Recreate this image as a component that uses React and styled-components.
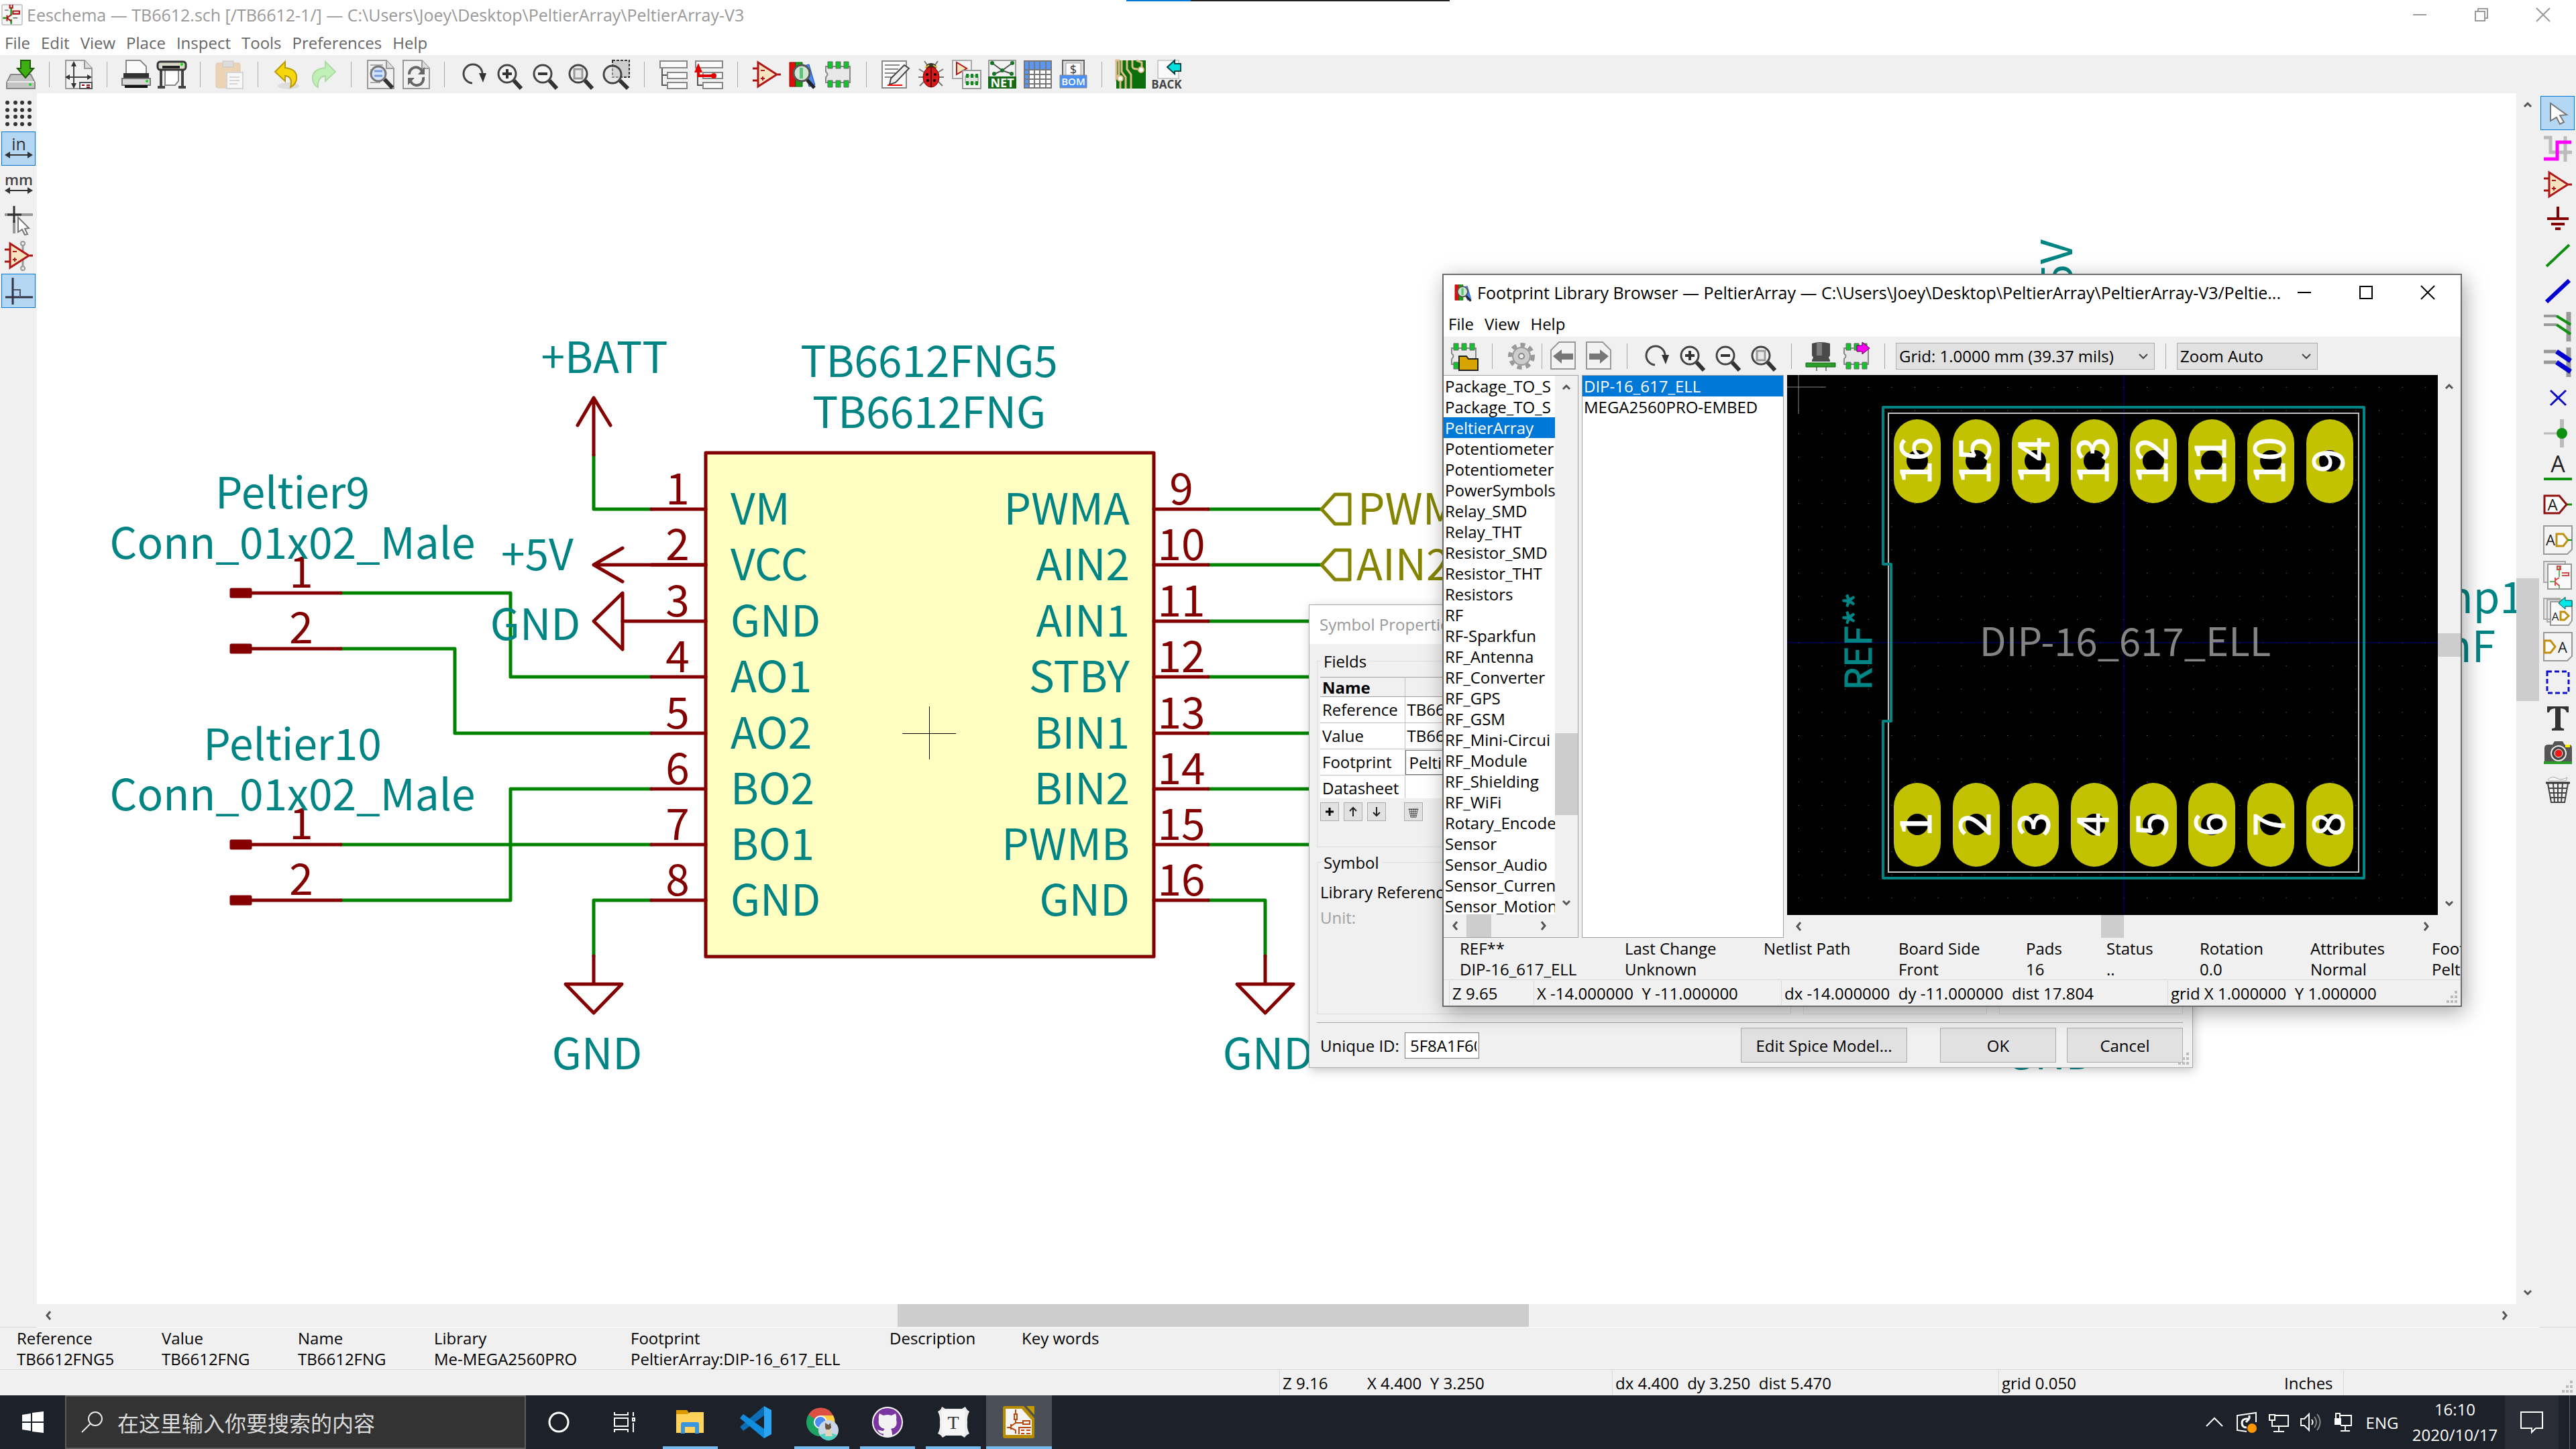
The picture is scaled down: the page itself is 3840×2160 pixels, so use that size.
import React from "react";
import styled, { createGlobalStyle, css } from "styled-components";

const ui = '"Open Sans", "Noto Sans", "Noto Sans CJK SC", sans-serif';
const plotter = '"Noto Sans CJK SC", "Open Sans", sans-serif';
const teal = "#008484";
const maroon = "#840000";
const wire = "#008400";
const olive = "#848400";

const GlobalStyle = createGlobalStyle`
  *, *::before, *::after { box-sizing: border-box; }
  html, body { margin: 0; background: #f0f0f0; }
  body { font-family: ${ui}; font-size: 24px; line-height: 31px; color: #000; }
  button, input, select { font: inherit; color: inherit; margin: 0; }
  button { border: 0; background: none; padding: 0; }
  ul { list-style: none; margin: 0; padding: 0; }
`;

/* ---------- shared parts ---------- */

const Desktop = styled.div`
  position: relative;
  display: flex;
  flex-direction: column;
  height: 100vh;
  overflow: hidden;
  background: #f0f0f0;
`;
const Glyph = styled.svg`
  display: block;
  flex: none;
  width: ${(p) => p.$size || 44}px;
  height: ${(p) => p.$size || 44}px;
  overflow: visible;
`;
const TitleBar = styled.header`
  display: flex;
  align-items: center;
  flex: none;
  height: ${(p) => p.$height}px;
  padding: 0 3px 2px ${(p) => p.$inset}px;
  background: #fff;
  color: ${(p) => (p.$active ? "#000" : "#999")};
`;
const TitleText = styled.h1`
  flex: 1;
  min-width: 0;
  margin: 0;
  padding-left: ${(p) => (p.$bare ? 0 : 7)}px;
  font-size: ${(p) => (p.$bare ? 24 : 25)}px;
  font-weight: 400;
  white-space: nowrap;
`;
const WindowButton = styled.button`
  display: flex;
  align-items: center;
  justify-content: center;
  width: 92px;
  height: 44px;
`;
const MenuBar = styled.nav`
  display: flex;
  align-items: center;
  flex: none;
  height: ${(p) => p.$height}px;
  padding: 0 0 2px ${(p) => p.$inset}px;
  gap: 16px;
  background: #fff;
  color: ${(p) => (p.$active ? "#000" : "#666")};
`;
const ToolBar = styled.div`
  display: flex;
  align-items: center;
  flex: none;
  height: 57px;
  padding-left: ${(p) => p.$inset}px;
  background: #f0f0f0;
`;
const ToolButton = styled.button`
  display: flex;
  align-items: center;
  justify-content: center;
  flex: none;
  width: 53px;
  height: 51px;
  opacity: ${(p) => (p.$dim ? 0.5 : 1)};
`;
const Divider = styled.span`
  flex: none;
  width: 1px;
  height: 38px;
  margin: 0 ${(p) => (p.$tight ? 4 : 16)}px;
  background: #a8a8a8;
`;
const SideBar = styled.aside`
  display: flex;
  flex-direction: column;
  flex: none;
  width: 55px;
  padding: 4px 2px;
  gap: 2px;
  background: #f0f0f0;
  border-bottom: 1px solid #d8d8d8;
`;
const SideButton = styled.button`
  display: flex;
  align-items: center;
  justify-content: center;
  width: 51px;
  height: 51px;
  border: 1px solid ${(p) => (p.$on ? "#0078d7" : "transparent")};
  background: ${(p) => (p.$on ? "#b3d7f3" : "transparent")};
`;

/* ---------- scroll bars ---------- */

const ScrollTrack = styled.div`
  display: flex;
  flex: none;
  flex-direction: ${(p) => (p.$vertical ? "column" : "row")};
  ${(p) => (p.$vertical ? css`width: 34px;` : css`height: 34px;`)}
  background: #f0f0f0;
`;
const ScrollArrow = styled.button`
  display: flex;
  align-items: center;
  justify-content: center;
  flex: none;
  width: 34px;
  height: 34px;
`;
const ScrollPart = styled.span`
  flex: ${(p) => p.$grow} 0 0;
  background: ${(p) => (p.$thumb ? "#cdcdcd" : "transparent")};
`;
const arrows = {
  up: "M3 11 8 6 13 11",
  down: "M3 5 8 10 13 5",
  left: "M11 2 6 8 11 14",
  right: "M5 2 10 8 5 14",
};
function Arrow({ dir }) {
  return (
    <ScrollArrow aria-label={"Scroll " + dir}>
      <Glyph $size={16} viewBox="0 0 16 16">
        <path d={arrows[dir]} fill="none" stroke="#555" strokeWidth="3" />
      </Glyph>
    </ScrollArrow>
  );
}
function ScrollBar({ vertical, parts }) {
  return (
    <ScrollTrack $vertical={vertical}>
      <Arrow dir={vertical ? "up" : "left"} />
      <ScrollPart $grow={parts[0]} />
      <ScrollPart $grow={parts[1]} $thumb />
      <ScrollPart $grow={parts[2]} />
      <Arrow dir={vertical ? "down" : "right"} />
    </ScrollTrack>
  );
}

/* ---------- icons ---------- */

const Lens = ({ children }) => (
  <>
    <path d="M29 31 40 43" stroke="#333" strokeWidth="6" />
    <circle cx="19" cy="21" r="13" fill="#f4f4f4" stroke="#444" strokeWidth="3" />
    {children}
  </>
);
const Sheet = ({ children }) => (
  <>
    <path d="M3 1H31L42 13V43H3Z" fill="#f1f1f1" stroke="#999" strokeWidth="2" />
    <path d="M31 1V13H42" fill="#ddd" stroke="#999" strokeWidth="2" />
    {children}
  </>
);
const OpAmp = () => (
  <>
    <path d="M1 13H10M1 31H10M38 22H43" stroke="#a11" strokeWidth="3" />
    <path d="M9 4V40L37 22Z" fill="#f6e3c0" stroke="#b01818" strokeWidth="3" />
    <path d="M13 16H19M13 28H19M16 25V31" stroke="#b01818" strokeWidth="2" />
  </>
);
const Chip = ({ children }) => (
  <>
    <path d="M4 10H40V34H4V26Q9 22 4 18Z" fill="#e8e8e8" stroke="#888" strokeWidth="2" />
    <path d="M7 3H14V13H7ZM19 3H26V13H19ZM31 3H38V13H31ZM7 31H14V41H7ZM19 31H26V41H19ZM31 31H38V41H31Z" fill="#12c42c" stroke="#666" strokeWidth="1" />
    {children}
  </>
);
const Books = () => (
  <>
    <path d="M3 4H12V40H3Z" fill="#e00d0d" stroke="#900" />
    <path d="M12 4H22V40H12Z" fill="#1a9c1a" stroke="#060" />
    <path d="M24 9 32 7 41 38 32 40Z" fill="#4a88f0" stroke="#25b" />
    <path d="M29 30 40 42" stroke="#222" strokeWidth="5" />
    <circle cx="21" cy="20" r="12" fill="#cfe6d4" stroke="#555" strokeWidth="3" />
    <path d="M18 12H23V28H18Z" fill="#5cc478" />
  </>
);
const Rows = () => (
  <>
    <path d="M5 12V38H13M5 23H13" fill="none" stroke="#555" strokeWidth="2" />
    <path d="M2 2H42V12H2ZM13 19H42V28H13ZM13 34H42V43H13Z" fill="#fafafa" stroke="#888" strokeWidth="2" />
  </>
);
const Rot = () => (
  <>
    <path d="M20 35A14 14 0 1 1 35 21" fill="none" stroke="#444" strokeWidth="3" />
    <path d="M30 20H41L36 34Z" fill="#333" />
  </>
);
const Trash = () => (
  <>
    <path d="M7 8Q14 2 20 6T36 5L34 10H9Z" fill="#f5f5f5" stroke="#aaa" />
    <path d="M4 13H40" stroke="#333" strokeWidth="3" />
    <path d="M7 14 12 42H32L37 14M8 21H36M9 28H35M11 35H33M15 14 17 42M22 14V42M29 14 27 42" fill="none" stroke="#444" strokeWidth="2" />
  </>
);

const icons = {
  save: (
    <>
      <path d="M7 22H37L43 34V43H1V34Z" fill="#c4c4c4" stroke="#888" strokeWidth="2" />
      <path d="M2 33H42" stroke="#eee" strokeWidth="2" />
      <circle cx="36" cy="37" r="2" fill="#1d1" />
      <path d="M22 1H36V13H41L29 27 17 13H22Z" fill="#3fae12" stroke="#1f5a08" strokeWidth="2" />
    </>
  ),
  page: (
    <Sheet>
      <path d="M3 26H40M15 5V42" stroke="#444" strokeWidth="2" />
      <path d="M15 2 11 10H19ZM15 43 11 35H19ZM2 26 9 22V30ZM42 26 35 22V30Z" fill="#333" />
      <path d="M24 34H42V43H24Z" fill="#fff" stroke="#555" strokeWidth="2" />
      <path d="M27 38H31M34 38H39M34 41H39" stroke="#900" strokeWidth="2" />
    </Sheet>
  ),
  print: (
    <>
      <path d="M7 1H28L37 10V22H7Z" fill="#fafafa" stroke="#888" strokeWidth="2" />
      <path d="M3 20H41V30H3Z" fill="#333" />
      <path d="M1 28H43V38H1Z" fill="#d6d6d6" stroke="#777" strokeWidth="2" />
      <path d="M5 40H39" stroke="#111" strokeWidth="4" />
      <circle cx="38" cy="32" r="2" fill="#1d1" />
    </>
  ),
  plot: (
    <>
      <path d="M6 16V40M38 16V40M1 41H12M32 41H43" stroke="#444" strokeWidth="4" />
      <path d="M12 12H32V32L27 38H12Z" fill="#fff" stroke="#888" strokeWidth="2" />
      <rect x="1" y="3" width="42" height="12" rx="4" fill="#d8d8c8" stroke="#333" strokeWidth="3" />
      <path d="M8 11H34" stroke="#222" strokeWidth="4" />
      <circle cx="37" cy="7" r="2" fill="#1d1" />
    </>
  ),
  paste: (
    <>
      <rect x="2" y="5" width="36" height="37" rx="3" fill="#e8b878" stroke="#d0a468" />
      <path d="M12 2H28V11H12Z" fill="#ccc" stroke="#999" />
      <path d="M18 19H42V43H18Z" fill="#fff" stroke="#bbb" strokeWidth="2" />
      <path d="M22 26H37M22 31H37M22 36H34" stroke="#bbb" strokeWidth="2" />
    </>
  ),
  undo: (
    <>
      <ellipse cx="24" cy="39" rx="16" ry="5" fill="#ddd" />
      <path d="M4 18 19 3V12Q38 14 36 29 35 37 27 41 31 25 19 24V32Z" fill="#f6d60c" stroke="#b89b10" strokeWidth="2" />
    </>
  ),
  redo: <path d="M41 18 26 3V12Q6 14 7 29 8 38 15 41 14 26 26 24V32Z" fill="#8ff07c" stroke="#6cc85e" strokeWidth="2" />,
  find: (
    <Sheet>
      <path d="M7 8H26M7 15H12M7 34H22" stroke="#aaa" strokeWidth="2" />
      <path d="M28 29 40 42" stroke="#333" strokeWidth="6" />
      <circle cx="19" cy="21" r="11" fill="#d5e4fb" stroke="#777" strokeWidth="3" />
      <path d="M13 17H25M13 24H25" stroke="#7b9cdc" strokeWidth="3" />
    </Sheet>
  ),
  replace: (
    <Sheet>
      <path d="M12 22A10 10 0 0 1 31 17M33 26A10 10 0 0 1 14 32" fill="none" stroke="#666" strokeWidth="4" />
      <path d="M35 11V22H25ZM10 38V27H20Z" fill="#666" />
    </Sheet>
  ),
  rotate: <Rot />,
  zoomIn: <Lens><path d="M12 21H26M19 14V28" stroke="#333" strokeWidth="4" /></Lens>,
  zoomOut: <Lens><path d="M12 21H26" stroke="#333" strokeWidth="4" /></Lens>,
  zoomFit: <Lens><rect x="13" y="14" width="12" height="14" fill="#e8e8e8" stroke="#999" strokeWidth="3" /></Lens>,
  zoomArea: (
    <>
      <rect x="17" y="1" width="25" height="25" fill="#ccc" stroke="#333" strokeWidth="2" strokeDasharray="4 2" />
      <path d="M28 31 40 43" stroke="#333" strokeWidth="6" />
      <circle cx="17" cy="22" r="13" fill="#ddd" fillOpacity="0.5" stroke="#444" strokeWidth="3" />
    </>
  ),
  hierarchy: <Rows />,
  leave: (
    <>
      <Rows />
      <path d="M6 14V24H28" fill="none" stroke="#e00000" strokeWidth="4" />
      <path d="M0 19 6 5 12 19Z" fill="#e00000" />
      <circle cx="29" cy="24" r="4" fill="#e00000" />
    </>
  ),
  opamp: <OpAmp />,
  books: <Books />,
  chip: <Chip />,
  annotate: (
    <>
      <path d="M2 2H38V42H2Z" fill="#fafafa" stroke="#888" strokeWidth="2" />
      <path d="M6 8H28M6 14H26M6 20H22M6 26H18" stroke="#888" strokeWidth="2" />
      <path d="M35 8 42 13 22 34 13 37 15 28Z" fill="#eee" stroke="#444" strokeWidth="2" />
      <path d="M10 38H32" stroke="#f00" strokeWidth="2" />
    </>
  ),
  bug: (
    <>
      <path d="M12 2 19 12M32 2 25 12M4 14 12 19M40 14 32 19M3 26H10M41 26H34M5 39 12 32M39 39 32 32" stroke="#777" strokeWidth="2" />
      <ellipse cx="22" cy="11" rx="8" ry="6" fill="#333" />
      <ellipse cx="22" cy="26" rx="12" ry="15" fill="#d81818" stroke="#800" />
      <path d="M22 12V41" stroke="#500" strokeWidth="2" />
      <path d="M13 12 19 8M31 12 25 8" stroke="#e8c020" strokeWidth="2" />
      <circle cx="16" cy="22" r="2" /><circle cx="28" cy="22" r="2" /><circle cx="17" cy="31" r="2" /><circle cx="27" cy="31" r="2" />
    </>
  ),
  assign: (
    <>
      <path d="M1 1H29V28H1Z" fill="#f4f4f4" stroke="#aaa" strokeWidth="2" />
      <path d="M7 4V22L22 13Z" fill="#f6e3c0" stroke="#b01818" strokeWidth="2" />
      <path d="M16 16H43V43H16Z" fill="#f4f4f4" stroke="#999" strokeWidth="2" />
      <path d="M20 24H39V35H20Z" fill="#e0e0e0" stroke="#888" />
      <path d="M21 21H25V27H21ZM28 21H32V27H28ZM35 21H39V27H35ZM21 32H25V38H21ZM28 32H32V38H28ZM35 32H39V38H35Z" fill="#0b8c1c" />
    </>
  ),
  net: (
    <>
      <path d="M2 1H42V26H2Z" fill="#f2f2f2" stroke="#999" strokeWidth="2" />
      <path d="M7 5 22 16 37 5M22 16 11 21M22 16 36 21" fill="none" stroke="#555" strokeWidth="2" />
      <circle cx="7" cy="5" r="3" fill="#172" /><circle cx="37" cy="5" r="3" fill="#172" /><circle cx="22" cy="16" r="3" fill="#172" /><circle cx="10" cy="21" r="3" fill="#172" /><circle cx="36" cy="21" r="3" fill="#172" />
      <path d="M1 25H43V43H1Z" fill="#166a16" />
      <text x="22" y="41" textAnchor="middle" fontSize="18" fontWeight="700" fill="#fff">NET</text>
    </>
  ),
  table: (
    <>
      <path d="M2 2H42V42H2Z" fill="#fff" />
      <path d="M2 2H42V15H2ZM2 15H9V42H2Z" fill="#5a96f5" />
      <path d="M2 2H42V42H2ZM2 15H42M2 22H42M2 29H42M2 36H42M9 2V42M17 2V42M25 2V42M34 2V42" fill="none" stroke="#777" strokeWidth="2" />
    </>
  ),
  bom: (
    <>
      <path d="M6 1H38V26H6Z" fill="#ddd" stroke="#666" strokeWidth="2" />
      <path d="M11 5H33V24H11Z" fill="#fff" stroke="#999" />
      <text x="22" y="21" textAnchor="middle" fontSize="18" fill="#333">$</text>
      <path d="M2 23H42V42H2Z" fill="#4a90f8" stroke="#888" />
      <text x="22" y="38" textAnchor="middle" fontSize="15" fontWeight="600" fill="#fff">BOM</text>
    </>
  ),
  pcb: (
    <>
      <path d="M0 1H44V43H0Z" fill="#0a6e0a" />
      <path d="M0 1H4V22L0 28ZM8 1V18L14 26V43M16 1V14L22 22V43M24 1V10Q24 14 32 14M30 1 38 4V12" fill="none" stroke="#dcbc8a" strokeWidth="3" />
      <circle cx="37" cy="15" r="4" fill="#fff" stroke="#dcbc8a" strokeWidth="2" /><circle cx="6" cy="28" r="4" fill="#fff" stroke="#dcbc8a" strokeWidth="2" />
      <path d="M6 32V43" stroke="#dcbc8a" strokeWidth="3" />
    </>
  ),
  back: (
    <>
      <path d="M9 1H40V28H9Z" fill="#fafafa" stroke="#ccc" strokeWidth="2" />
      <path d="M23 11 34 1V6H43V17H34V21Z" fill="#00e0e0" stroke="#044" strokeWidth="2" />
      <text x="22" y="43" textAnchor="middle" fontSize="17" fontWeight="700" fill="#444">BACK</text>
    </>
  ),
  grid: (
    <>
      {[6, 17, 27, 38].map((y) => [5, 17, 27, 38].map((x) => <circle key={x + "-" + y} cx={x} cy={y} r="3" fill="#333" />))}
    </>
  ),
  inch: (
    <>
      <text x="22" y="24" textAnchor="middle" fontSize="25" fill="#333">in</text>
      <path d="M5 31H39" stroke="#333" strokeWidth="2" />
      <path d="M1 31 9 26V36ZM43 31 35 26V36Z" fill="#333" />
    </>
  ),
  mm: (
    <>
      <text x="22" y="23" textAnchor="middle" fontSize="22" fontWeight="600" fill="#444">mm</text>
      <path d="M5 31H39" stroke="#333" strokeWidth="2" />
      <path d="M1 31 9 26V36ZM43 31 35 26V36Z" fill="#333" />
    </>
  ),
  cursor: (
    <>
      <path d="M1 14H43M15 22V42" stroke="#999" strokeWidth="4" />
      <path d="M15 1V26M5 14H26" stroke="#333" strokeWidth="3" />
      <path d="M21 18 37 34 31 35 35 43 31 44 27 36 21 40Z" fill="#fff" stroke="#777" strokeWidth="2" />
    </>
  ),
  hidden: (
    <>
      <path d="M28 5V39" stroke="#999" strokeWidth="3" />
      <circle cx="28" cy="4" r="3" fill="#eee" stroke="#999" strokeWidth="2" /><circle cx="28" cy="41" r="3" fill="#eee" stroke="#999" strokeWidth="2" />
      <OpAmp />
    </>
  ),
  ortho: (
    <>
      <path d="M13 2V42M2 31H43" stroke="#334" strokeWidth="3" />
      <path d="M14 20H24V31" fill="none" stroke="#556" strokeWidth="2" />
    </>
  ),
  pointer: <path d="M11 7 35 24 25 25 31 35 25 38 20 28 11 33Z" fill="#fff" stroke="#777" strokeWidth="2" />,
  highlight: (
    <>
      <path d="M1 5H11V27H43M33 3V41" fill="none" stroke="#bbb" strokeWidth="5" />
      <path d="M1 37H21V12H42" fill="none" stroke="#f0f" strokeWidth="5" />
    </>
  ),
  ground: <path d="M22 2V20M6 20H38M12 28H32M18 35H26" stroke={maroon} strokeWidth="4" />,
  wire: <path d="M5 38 39 6" stroke="#109010" strokeWidth="4" />,
  bus: <path d="M5 38 39 6" stroke="#0000d0" strokeWidth="6" />,
  wireEntry: (
    <>
      <path d="M1 6H20M1 19H20" stroke="#999" strokeWidth="4" />
      <path d="M38 0V44" stroke="#999" strokeWidth="7" />
      <path d="M20 6 41 19M20 19 41 33" stroke="#109010" strokeWidth="4" />
    </>
  ),
  busEntry: (
    <>
      <path d="M1 6H20M1 22H20" stroke="#999" strokeWidth="5" />
      <path d="M38 0V44" stroke="#999" strokeWidth="7" />
      <path d="M20 6 41 20M20 22 41 36" stroke="#0000d0" strokeWidth="7" />
    </>
  ),
  noConnect: <path d="M11 11 34 33M34 11 11 33" stroke="#1010c0" strokeWidth="3" />,
  junction: (
    <>
      <path d="M1 22H22" stroke="#bbb" strokeWidth="3" />
      <path d="M28 1V43" stroke="#bbb" strokeWidth="6" />
      <circle cx="28" cy="22" r="8" fill="#109010" />
    </>
  ),
  label: (
    <>
      <text x="22" y="27" textAnchor="middle" fontSize="34" fill="#222">A</text>
      <path d="M1 37H43" stroke="#109010" strokeWidth="4" />
    </>
  ),
  globalLabel: (
    <>
      <path d="M34 22H43" stroke="#109010" strokeWidth="3" />
      <path d="M2 9H24L35 22 24 35H2Z" fill="#fff" stroke="#901010" strokeWidth="3" />
      <text x="14" y="31" textAnchor="middle" fontSize="24" fill="#222">A</text>
    </>
  ),
  hierLabel: (
    <>
      <path d="M1 1H43V36L36 43H1Z" fill="#f4f4f4" stroke="#999" strokeWidth="2" />
      <text x="11" y="30" textAnchor="middle" fontSize="22" fill="#222">A</text>
      <path d="M20 13H30L37 22 30 31H20Z" fill="#fff" stroke="#c09010" strokeWidth="3" />
      <path d="M37 22H43" stroke="#109010" strokeWidth="2" />
    </>
  ),
  sheet: (
    <>
      <path d="M1 1H33V32H1Z" fill="#e6e6e6" stroke="#aaa" strokeWidth="2" />
      <path d="M7 5H42V42H7Z" fill="#fafafa" stroke="#999" strokeWidth="2" />
      <path d="M10 31H17M24 8V24M24 36V41" stroke="#5cb85c" strokeWidth="2" />
      <path d="M18 25V37M18 29 24 25M18 32 24 37M28 18H38V22H28M21 8H26V13H21Z" fill="none" stroke="#d84848" strokeWidth="2" />
    </>
  ),
  importLabel: (
    <>
      <path d="M1 3H25V34H1ZM6 5H30V38H6Z" fill="#e8e8e8" stroke="#aaa" strokeWidth="2" />
      <path d="M11 8H43V36L38 43H11Z" fill="#fafafa" stroke="#999" strokeWidth="2" />
      <path d="M23 10 33 1V6H43V15H33V19Z" fill="#00e8e8" stroke="#044" strokeWidth="1" />
      <text x="18" y="36" textAnchor="middle" fontSize="17" fill="#222">A</text>
      <path d="M26 23H32L38 29 32 35H26Z" fill="#fff" stroke="#c09010" strokeWidth="3" />
    </>
  ),
  sheetPin: (
    <>
      <path d="M1 1H43V36L36 43H1Z" fill="#f4f4f4" stroke="#999" strokeWidth="2" />
      <path d="M2 13H11L18 22 11 31H2Z" fill="#fff" stroke="#c09010" strokeWidth="3" />
      <text x="29" y="31" textAnchor="middle" fontSize="22" fill="#222">A</text>
    </>
  ),
  dashed: <rect x="6" y="6" width="32" height="32" fill="none" stroke="#1010d0" strokeWidth="3" strokeDasharray="7 4" />,
  text: <path d="M6 5H38V14H35Q34 8 26 8V35Q26 38 31 38V41H13V38Q18 38 18 35V8Q10 8 9 14H6Z" fill="#333" />,
  camera: (
    <>
      <path d="M2 14Q2 9 8 9H14L17 4H29L32 9H38Q43 9 43 14V35H2Z" fill="#555" />
      <path d="M33 9H40V13H33Z" fill="#fe0" />
      <circle cx="23" cy="22" r="11" fill="#444" stroke="#eee" strokeWidth="2" />
      <circle cx="23" cy="22" r="6" fill="#f11818" stroke="#fff" />
      <path d="M1 36H43" stroke="#2a9a2a" strokeWidth="4" />
    </>
  ),
  trash: <Trash />,
  libOpen: (
    <Chip>
      <path d="M15 22H26L29 26H43V43H15Z" fill="#d8a400" stroke="#222" strokeWidth="2" />
    </Chip>
  ),
  gear: (
    <>
      <circle cx="22" cy="22" r="17" fill="none" stroke="#999" strokeWidth="6" strokeDasharray="7 6" />
      <circle cx="22" cy="22" r="13" fill="#ccc" stroke="#999" strokeWidth="2" />
      <circle cx="22" cy="22" r="4" fill="#eee" stroke="#888" strokeWidth="2" />
    </>
  ),
  prev: (
    <>
      <path d="M16 1H40V41H4V13Z" fill="#f2f2f2" stroke="#999" strokeWidth="2" />
      <path d="M7 22 20 12V18H37V27H20V33Z" fill="#777" />
    </>
  ),
  next: (
    <>
      <path d="M4 1H28L40 13V41H4Z" fill="#f2f2f2" stroke="#999" strokeWidth="2" />
      <path d="M37 22 24 12V18H8V27H24V33Z" fill="#777" />
    </>
  ),
  view3d: (
    <>
      <path d="M16 38V44M30 38V44" stroke="#888" strokeWidth="2" />
      <path d="M9 3Q22 -1 36 3V21L34 24 36 28V30H9V28L11 24 9 21Z" fill="#4a4a4a" />
      <path d="M16 2H24V21H16Z" fill="#7c7c7c" />
      <path d="M0 32H44V38H0Z" fill="#2c9c2c" stroke="#0a6a0a" />
    </>
  ),
  insert: (
    <Chip>
      <path d="M23 6H31V1L42 10 31 19V15H23Z" fill="#f0e" stroke="#505" strokeWidth="1" />
    </Chip>
  ),
  app: (
    <>
      <rect x="0" y="0" width="44" height="44" rx="3" fill="#f6f6f6" stroke="#bbb" strokeWidth="2" />
      <path d="M2 29H10M20 6V24M20 32V42" stroke="#2a9a2a" strokeWidth="4" />
      <path d="M17 0V7H23V0M24 14H38V20H24ZM11 23V36M11 29 20 22M11 29 20 36" fill="none" stroke="#b01010" strokeWidth="3" />
      <path d="M6 12H14M24 29H34" stroke="#666" strokeWidth="2" />
    </>
  ),
};

const disabledTools = ["paste", "redo"];

function ToolItem({ name }) {
  return (
    <ToolButton aria-label={name} $dim={disabledTools.includes(name)}>
      <Glyph viewBox="0 0 44 44">{icons[name]}</Glyph>
    </ToolButton>
  );
}
function Tools({ groups }) {
  return groups.map((group, i) => (
    <React.Fragment key={i}>
      {i > 0 && <Divider />}
      {group.map((name) => <ToolItem key={name} name={name} />)}
    </React.Fragment>
  ));
}
function Side({ items, on }) {
  return (
    <SideBar>
      {items.map((name) => (
        <SideButton key={name} aria-label={name} aria-pressed={on.includes(name)} $on={on.includes(name)}>
          <Glyph viewBox="0 0 44 44">{icons[name]}</Glyph>
        </SideButton>
      ))}
    </SideBar>
  );
}
function WindowControls({ maximized }) {
  return (
    <>
      <WindowButton aria-label="Minimize">
        <Glyph $size={20} viewBox="0 0 20 20"><path d="M0 10H20" stroke="currentColor" strokeWidth="2" /></Glyph>
      </WindowButton>
      <WindowButton aria-label={maximized ? "Restore" : "Maximize"}>
        <Glyph $size={20} viewBox="0 0 20 20">
          <path d={maximized ? "M1 5H15V19H1ZM5 5V1H19V15H15" : "M1 1H19V19H1Z"} fill="none" stroke="currentColor" strokeWidth="2" />
        </Glyph>
      </WindowButton>
      <WindowButton aria-label="Close">
        <Glyph $size={20} viewBox="0 0 20 20"><path d="M0 0 20 20M20 0 0 20" stroke="currentColor" strokeWidth="2" /></Glyph>
      </WindowButton>
    </>
  );
}

/* ---------- schematic ---------- */

const Workspace = styled.main`
  display: flex;
  flex: 1;
  min-height: 0;
`;
const Editor = styled.section`
  display: flex;
  flex-direction: column;
  flex: 1;
  min-width: 0;
  border-bottom: 1px solid #fff;
`;
const EditorView = styled.div`
  display: flex;
  flex: 1;
  min-height: 0;
`;
const Drawing = styled.svg`
  display: block;
  flex: 1;
  min-width: 0;
  height: 100%;
  background: ${(p) => p.$paper};
`;

const rows = [759, 842, 926, 1009, 1093, 1176, 1259, 1342];
const leftPins = ["VM", "VCC", "GND", "AO1", "AO2", "BO2", "BO1", "GND"];
const rightPins = ["PWMA", "AIN2", "AIN1", "STBY", "BIN1", "BIN2", "PWMB", "GND"];

function Schematic() {
  return (
    <Drawing $paper="#fff" role="img" aria-label="Schematic sheet">
      <g transform="translate(-55 -139)" fontFamily={plotter} fontSize="64" strokeWidth="5" strokeLinecap="round" strokeLinejoin="round" fill="none">
        <path d="M1052 675H1720V1426H1052Z" fill="#ffffc2" stroke={maroon} />
        <g stroke={wire}>
          <path d="M885 678V759H971M508 884H761V1009H971M508 967H678V1093H971" />
          <path d="M508 1342H761V1176H971M508 1259H971M971 1342H885V1425" />
          <path d="M1801 1342H1886V1425" />
          {rows.slice(0, 7).map((y) => <path key={y} d={`M1801 ${y}H1969`} />)}
        </g>
        <g stroke={maroon}>
          <path d="M885 678V593M861 634 885 593 910 634M1052 842H885M928 817 885 842 928 867" />
          <path d="M928 926 V884L885 926 928 968V926" />
          {rows.map((y, i) => <path key={y} d={`M${i === 2 ? 928 : 971} ${y}H1052M1720 ${y}H1801`} />)}
          {[884, 967, 1259, 1342].map((y) => (
            <path key={y} d={`M375 ${y}H508M345 ${y - 5}H373V${y + 5}H345Z`} fill={maroon} />
          ))}
          {[885, 1886].map((x) => <path key={x} d={`M${x} 1425V1467M${x - 42} 1467H${x + 42}L${x} 1510Z`} />)}
        </g>
        <g stroke={olive}>
          {[759, 842].map((y) => <path key={y} d={`M1970 ${y}L1990 ${y - 22}H2012V${y + 22}H1990Z`} />)}
        </g>
        <path d="M1345 1093H1425M1385 1053V1132" stroke="#000" strokeWidth="1" shapeRendering="crispEdges" />

        <g fill={maroon} textAnchor="middle">
          {rows.map((y, i) => (
            <React.Fragment key={y}>
              <text x="1010" y={y - 7}>{i + 1}</text>
              <text x="1761" y={y - 7}>{i + 9}</text>
            </React.Fragment>
          ))}
          <text x="449" y="876">1</text>
          <text x="449" y="959">2</text>
          <text x="449" y="1251">1</text>
          <text x="449" y="1334">2</text>
        </g>
        <g fill={teal}>
          {rows.map((y, i) => (
            <React.Fragment key={y}>
              <text x="1089" y={y + 23}>{leftPins[i]}</text>
              <text x="1684" y={y + 23} textAnchor="end">{rightPins[i]}</text>
            </React.Fragment>
          ))}
        </g>
        <g fill={teal} textAnchor="middle">
          <text x="901" y="556">+BATT</text>
          <text x="801" y="850">+5V</text>
          <text x="798" y="954">GND</text>
          <text x="890" y="1594">GND</text>
          <text x="1890" y="1594">GND</text>
          <text x="3056" y="1594">GND</text>
          <text x="436" y="758">Peltier9</text>
          <text x="436" y="833">Conn_01x02_Male</text>
          <text x="436" y="1133">Peltier10</text>
          <text x="436" y="1208">Conn_01x02_Male</text>
          <text x="1385" y="562">TB6612FNG5</text>
          <text x="1385" y="638">TB6612FNG</text>
          <text textAnchor="end" transform="translate(3089 357) rotate(-90)">+5V</text>
          <text x="3762" y="914" textAnchor="end">Camp1</text>
          <text x="3720" y="987" textAnchor="end">100nF</text>
        </g>
        <g fill={olive}>
          <text x="2024" y="782">PWMA</text>
          <text x="2022" y="865">AIN2</text>
          <text x="2022" y="949">AIN1</text>
        </g>
      </g>
    </Drawing>
  );
}

/* ---------- message panel and status bar ---------- */

const InfoPanel = styled.dl`
  display: grid;
  grid-template-columns: ${(p) => p.$cols};
  flex: none;
  height: 63px;
  margin: 0;
  padding-left: ${(p) => p.$inset}px;
  border-bottom: 1px solid #d8d8d8;
  overflow: hidden;
  white-space: nowrap;
`;
const InfoItem = styled.div`
  min-width: 0;
`;
const InfoName = styled.dt`
  height: 31px;
`;
const InfoValue = styled.dd`
  height: 31px;
  margin: 0;
`;
function Info({ cols, inset, items }) {
  return (
    <InfoPanel $cols={cols} $inset={inset}>
      {items.map(([name, value]) => (
        <InfoItem key={name}>
          <InfoName>{name}</InfoName>
          <InfoValue>{value}</InfoValue>
        </InfoItem>
      ))}
    </InfoPanel>
  );
}
const StatusBar = styled.footer`
  position: relative;
  display: grid;
  grid-template-columns: ${(p) => p.$cols};
  align-items: stretch;
  flex: none;
  height: 38px;
  padding: 1px 0;
`;
const StatusCell = styled.span`
  padding: 3px 0 0 4px;
  border-left: 1px solid ${(p) => (p.$plain ? "transparent" : "#d8d8d8")};
  white-space: pre;
`;
const GripMark = styled(Glyph)`
  position: absolute;
  right: 3px;
  bottom: 4px;
`;
const Grip = () => (
  <GripMark $size={18} viewBox="0 0 18 18">
    <path d="M12 0H16V4H12ZM12 7H16V11H12ZM12 14H16V18H12ZM6 7H10V11H6ZM6 14H10V18H6ZM0 14H4V18H0Z" fill="#bbb" />
  </GripMark>
);

/* ---------- floating windows ---------- */

const FloatWindow = styled.section`
  position: absolute;
  left: ${(p) => p.$x}px;
  top: ${(p) => p.$y}px;
  width: ${(p) => p.$w}px;
  height: ${(p) => p.$h}px;
  display: flex;
  flex-direction: column;
  background: #f0f0f0;
  border: ${(p) => (p.$active ? "2px solid #6b6b6b" : "1px solid #aaa")};
  box-shadow: ${(p) => (p.$active ? "4px 8px 30px rgba(0,0,0,.35)" : "2px 4px 14px rgba(0,0,0,.22)")};
`;

/* symbol properties */
const DialogBody = styled.form`
  display: flex;
  flex-direction: column;
  flex: 1;
  min-height: 0;
  padding: 10px 14px 7px 11px;
`;
const Group = styled.fieldset`
  flex: ${(p) => p.$flex};
  min-width: 0;
  margin: 0;
  padding: ${(p) => p.$pad || 8}px 4px 0;
  border: 1px solid #dcdcdc;
`;
const GroupTitle = styled.legend`
  margin-left: 1px;
  padding: 0 4px;
  height: 31px;
`;
const FieldTable = styled.table`
  width: 1200px;
  table-layout: fixed;
  border-collapse: collapse;
  background: #fff;
  border-top: 1px solid #a0a0a0;
`;
const HeadCell = styled.th`
  width: ${(p) => p.$w}px;
  height: 29px;
  padding: 0 3px;
  border-right: 1px solid #c0c0c0;
  border-bottom: 1px solid #a0a0a0;
  background: #f0f0f0;
  text-align: left;
  line-height: 27px;
`;
const Cell = styled.td`
  height: ${(p) => (p.$last ? 34 : 39)}px;
  padding: ${(p) => (p.$last ? 4 : 0)}px 3px 0;
  border-right: 1px solid #c0c0c0;
  border-bottom: ${(p) => (p.$last ? "0" : "1px solid #c0c0c0")};
  line-height: 30px;
  white-space: nowrap;
`;
const CellInput = styled.input`
  display: block;
  width: 600px;
  height: 37px;
  margin-left: -3px;
  padding: 0 5px;
  border: 1px solid #777;
  background: #fff;
`;
const SmallButtons = styled.div`
  display: flex;
  gap: 7px;
  margin-top: 6px;
`;
const SmallButton = styled.button`
  display: flex;
  align-items: center;
  justify-content: center;
  width: 28px;
  height: 28px;
  margin-left: ${(p) => (p.$apart ? 20 : 0)}px;
  border: 1px solid #adadad;
  background: #e1e1e1;
`;
const GroupRow = styled.div`
  display: flex;
  gap: 18px;
  flex: 1;
  margin-top: 7px;
`;
const Line = styled.p`
  margin: 0;
  line-height: 38px;
  color: ${(p) => (p.$dim ? "#a0a0a0" : "#000")};
`;
const Rule = styled.hr`
  flex: none;
  width: 100%;
  height: 2px;
  margin: 12px 0 6px;
  border: 0;
  border-top: 1px solid #a0a0a0;
  background: #fff;
`;
const DialogFooter = styled.div`
  display: flex;
  align-items: center;
  gap: 16px;
  padding-left: 5px;
`;
const IdLabel = styled.label`
  display: flex;
  align-items: center;
  flex: 1;
`;
const IdCaption = styled.span`
  width: 126px;
`;
const IdInput = styled.input`
  width: 111px;
  height: 39px;
  padding: 0 3px 0 7px;
  border: 1px solid #7a7a7a;
  background: #fff;
`;
const PushButton = styled.button`
  width: ${(p) => (p.$wide ? 248 : 173)}px;
  height: 52px;
  margin-right: ${(p) => (p.$wide ? 33 : 0)}px;
  border: 1px solid #adadad;
  background: #e1e1e1;
`;

function SymbolDialog() {
  const fields = [["Reference", "TB6612FNG5"], ["Value", "TB6612FNG"], ["Footprint", null], ["Datasheet", ""]];
  return (
    <FloatWindow $x={1951} $y={901} $w={1318} $h={691}>
      <TitleBar $height={58} $inset={15}>
        <TitleText as="h2" $bare>Symbol Properties</TitleText>
      </TitleBar>
      <DialogBody onSubmit={(e) => e.preventDefault()}>
        <Group $flex="0 0 293px">
          <GroupTitle>Fields</GroupTitle>
          <FieldTable>
            <thead>
              <tr>
                <HeadCell $w={126}>Name</HeadCell>
                <HeadCell>{""}</HeadCell>
              </tr>
            </thead>
            <tbody>
              {fields.map(([name, value]) => (
                <tr key={name}>
                  <Cell $last={name === "Datasheet"}>{name}</Cell>
                  <Cell $last={name === "Datasheet"}>
                    {value === null
                      ? <CellInput aria-label="Footprint" defaultValue="PeltierArray:DIP-16_617_ELL" />
                      : value}
                  </Cell>
                </tr>
              ))}
            </tbody>
          </FieldTable>
          <SmallButtons>
            <SmallButton type="button" aria-label="Add field">
              <Glyph $size={16} viewBox="0 0 16 16"><path d="M2 8H14M8 2V14" stroke="#000" strokeWidth="3" /></Glyph>
            </SmallButton>
            <SmallButton type="button" aria-label="Move up">
              <Glyph $size={16} viewBox="0 0 16 16"><path d="M8 15V2M3 7 8 2 13 7" fill="none" stroke="#222" strokeWidth="2" /></Glyph>
            </SmallButton>
            <SmallButton type="button" aria-label="Move down">
              <Glyph $size={16} viewBox="0 0 16 16"><path d="M8 1V14M3 9 8 14 13 9" fill="none" stroke="#222" strokeWidth="2" /></Glyph>
            </SmallButton>
            <SmallButton type="button" aria-label="Delete field" $apart>
              <Glyph $size={18} viewBox="0 0 44 44"><Trash /></Glyph>
            </SmallButton>
          </SmallButtons>
        </Group>
        <GroupRow>
          <Group $flex="1 1 0" $pad={10}>
            <GroupTitle>Symbol</GroupTitle>
            <Line>Library Reference:</Line>
            <Line $dim>Unit:</Line>
          </Group>
          <Group $flex="0 0 274px" />
          <Group $flex="0 0 274px" />
        </GroupRow>
        <Rule />
        <DialogFooter>
          <IdLabel>
            <IdCaption>Unique ID:</IdCaption>
            <IdInput defaultValue="5F8A1F60" />
          </IdLabel>
          <PushButton type="button" $wide>Edit Spice Model...</PushButton>
          <PushButton type="button">OK</PushButton>
          <PushButton type="button">Cancel</PushButton>
        </DialogFooter>
      </DialogBody>
      <Grip />
    </FloatWindow>
  );
}

/* footprint browser */
const SelectBox = styled.label`
  position: relative;
  flex: none;
  width: ${(p) => p.$w}px;
`;
const Select = styled.select`
  display: block;
  width: 100%;
  height: 40px;
  padding: 0 4px;
  appearance: none;
  border: 1px solid #adadad;
  border-radius: 0;
  background: #e1e1e1;
`;
const Chevron = styled(Glyph)`
  position: absolute;
  right: 10px;
  top: 13px;
  pointer-events: none;
`;
function Dropdown({ label, value, width }) {
  return (
    <SelectBox $w={width}>
      <Select aria-label={label} defaultValue={value}>
        <option>{value}</option>
      </Select>
      <Chevron $size={14} viewBox="0 0 14 14"><path d="M1 4 7 10 13 4" fill="none" stroke="#444" strokeWidth="2" /></Chevron>
    </SelectBox>
  );
}
const Browser = styled.div`
  display: flex;
  flex: 1;
  min-height: 0;
`;
const ListPane = styled.div`
  display: flex;
  flex-direction: column;
  flex: none;
  width: ${(p) => p.$w}px;
  margin-right: 5px;
  border: 1px solid #a0a0a0;
  border-left-width: ${(p) => (p.$flush ? 0 : 1)}px;
  background: #fff;
`;
const ListRow = styled.div`
  display: flex;
  flex: 1;
  min-height: 0;
`;
const List = styled.ul`
  flex: 1;
  min-width: 0;
  overflow: hidden;
`;
const Item = styled.li`
  height: 31px;
  padding-left: 2px;
  line-height: 31px;
  white-space: nowrap;
  background: ${(p) => (p.$on ? "#0078d7" : "transparent")};
  color: ${(p) => (p.$on ? "#fff" : "#000")};
`;
const Corner = styled.div`
  display: flex;
  background: #f0f0f0;
`;
const CornerScroll = styled.div`
  flex: 1;
`;
const CornerGap = styled.span`
  width: 34px;
`;
const Preview = styled.div`
  display: flex;
  flex-direction: column;
  flex: 1;
  min-width: 0;
`;

const libraries = [
  ["Package_TO_S", "smd"], ["Package_TO_S", "tht"], ["PeltierArray"], ["Potentiometer", "smd"], ["Potentiometer", "tht"],
  ["PowerSymbols"], ["Relay_SMD"], ["Relay_THT"], ["Resistor_SMD"], ["Resistor_THT"], ["Resistors"], ["RF"], ["RF-Sparkfun"],
  ["RF_Antenna"], ["RF_Converter"], ["RF_GPS"], ["RF_GSM"], ["RF_Mini-Circui"], ["RF_Module"], ["RF_Shielding"], ["RF_WiFi"],
  ["Rotary_Encoder"], ["Sensor"], ["Sensor_Audio"], ["Sensor_Current"], ["Sensor_Motion"],
];
const padX = [2858, 2946, 3034, 3122, 3210, 3297, 3385, 3473];

function Pad({ x, y, n }) {
  return (
    <>
      <rect x={x - 35} y={y - 62} width="70" height="125" rx="35" fill="#c2c200" />
      <circle cx={x} cy={y} r="16" fill="#000" />
      <text transform={`translate(${x + 21} ${y}) rotate(-90)`} textAnchor="middle" fontSize="64" fill="#fff" stroke="#fff" strokeWidth="1">{n}</text>
    </>
  );
}
function Footprint() {
  return (
    <Drawing $paper="#000" role="img" aria-label="Footprint preview">
      <defs>
        <pattern id="dots" x="2681" y="578" width="34.6" height="34.6" patternUnits="userSpaceOnUse">
          <rect width="1" height="1" fill="#848484" />
        </pattern>
      </defs>
      <g transform="translate(-2664 -560)" fontFamily={plotter} fill="none">
        <rect x="2664" y="559" width="970" height="810" fill="url(#dots)" />
        <path d="M2664 959H3634M3166 559V1364" stroke="#000084" />
        <path d="M2815 617H3516V1301H2815Z" stroke="#c2c2c2" strokeWidth="2" />
        <path d="M2807 608H3524V1310H2807V1076H2819V842H2807Z" stroke={teal} strokeWidth="4" strokeLinejoin="round" />
        {padX.map((x, i) => <Pad key={x} x={x} y={688} n={16 - i} />)}
        {padX.map((x, i) => <Pad key={x} x={x} y={1230} n={i + 1} />)}
        <text x="3168" y="979" textAnchor="middle" fontSize="58" fill="#848484">DIP-16_617_ELL</text>
        <text transform="translate(2790 957) rotate(-90)" textAnchor="middle" fontSize="54" fill={teal} stroke={teal} strokeWidth="1">REF**</text>
        <path d="M2664 578H2722M2681 560V618" stroke="#848484" />
      </g>
    </Drawing>
  );
}

function FootprintBrowser() {
  return (
    <FloatWindow $x={2150} $y={408} $w={1520} $h={1093} $active>
      <TitleBar $height={54} $inset={15} $active>
        <Glyph $size={28} viewBox="0 0 44 44"><Books /></Glyph>
        <TitleText as="h2">{"Footprint Library Browser — PeltierArray — C:\\Users\\Joey\\Desktop\\PeltierArray\\PeltierArray-V3/Peltie..."}</TitleText>
        <WindowControls />
      </TitleBar>
      <MenuBar $height={38} $inset={7} $active>
        {["File", "View", "Help"].map((m) => <button key={m}>{m}</button>)}
      </MenuBar>
      <ToolBar $inset={3}>
        <ToolItem name="libOpen" />
        <Divider />
        <ToolItem name="gear" />
        <Divider $tight />
        <Tools groups={[["prev", "next"], ["rotate", "zoomIn", "zoomOut", "zoomFit"], ["view3d", "insert"]]} />
        <Divider />
        <Dropdown label="Grid" value="Grid: 1.0000 mm (39.37 mils)" width={386} />
        <Divider />
        <Dropdown label="Zoom" value="Zoom Auto" width={210} />
      </ToolBar>
      <Browser>
        <ListPane $w={201} $flush>
          <ListRow>
            <List role="listbox" aria-label="Libraries">
              {libraries.map(([name, kind]) => (
                <Item key={name + kind} role="option" aria-selected={name === "PeltierArray"} $on={name === "PeltierArray"}>{name}</Item>
              ))}
            </List>
            <ScrollBar vertical parts={[500, 123, 114]} />
          </ListRow>
          <Corner>
            <CornerScroll><ScrollBar parts={[0, 37, 61]} /></CornerScroll>
            <CornerGap />
          </Corner>
        </ListPane>
        <ListPane $w={301}>
          <List role="listbox" aria-label="Footprints">
            <Item role="option" aria-selected $on>DIP-16_617_ELL</Item>
            <Item role="option" aria-selected={false}>MEGA2560PRO-EMBED</Item>
          </List>
        </ListPane>
        <Preview>
          <EditorView>
            <Footprint />
            <ScrollBar vertical parts={[351, 34, 351]} />
          </EditorView>
          <Corner>
            <CornerScroll><ScrollBar parts={[433, 34, 433]} /></CornerScroll>
            <CornerGap />
          </Corner>
        </Preview>
      </Browser>
      <Info
        cols="246px 207px 201px 190px 120px 139px 165px 181px 1fr"
        inset={24}
        items={[
          ["REF**", "DIP-16_617_ELL"], ["Last Change", "Unknown"], ["Netlist Path", ""], ["Board Side", "Front"],
          ["Pads", "16"], ["Status", ".."], ["Rotation", "0.0"], ["Attributes", "Normal"], ["Footprint", "PeltierArray"],
        ]}
      />
      <StatusBar $cols="8px 126px 369px 576px 1fr">
        <StatusCell $plain />
        <StatusCell>Z 9.65</StatusCell>
        <StatusCell>X -14.000000  Y -11.000000</StatusCell>
        <StatusCell>dx -14.000000  dy -11.000000  dist 17.804</StatusCell>
        <StatusCell>grid X 1.000000  Y 1.000000</StatusCell>
        <Grip />
      </StatusBar>
    </FloatWindow>
  );
}

/* ---------- task bar ---------- */

const TaskBar = styled.div`
  display: flex;
  flex: none;
  height: 80px;
  background: #1d212a;
  color: #fff;
`;
const StartButton = styled.button`
  display: flex;
  align-items: center;
  justify-content: center;
  width: 97px;
`;
const SearchBox = styled.label`
  display: flex;
  align-items: center;
  gap: 22px;
  width: 687px;
  padding-left: 22px;
  border: 2px solid #5c5c5a;
  background: #333;
`;
const SearchInput = styled.input`
  flex: 1;
  min-width: 0;
  padding: 0;
  border: 0;
  background: none;
  font-family: "Noto Sans CJK SC", sans-serif;
  font-size: 32px;
  &::placeholder { color: #dadada; opacity: 1; }
`;
const TaskButton = styled.button`
  display: flex;
  align-items: center;
  justify-content: center;
  position: relative;
  width: 98px;
  background: ${(p) => (p.$front ? "#4b4f58" : "transparent")};
  &::after {
    content: "";
    position: absolute;
    left: ${(p) => (p.$front ? 0 : 8)}px;
    right: ${(p) => (p.$front ? 0 : 8)}px;
    bottom: 0;
    height: ${(p) => (p.$open ? 4 : 0)}px;
    background: #76b9ed;
  }
`;
const Tray = styled.div`
  display: flex;
  align-items: center;
  margin-left: auto;
`;
const TrayButton = styled.button`
  display: flex;
  align-items: center;
  justify-content: center;
  width: 48px;
  height: 80px;
`;
const Language = styled.button`
  width: 68px;
`;
const Clock = styled.time`
  width: 149px;
  text-align: center;
  line-height: 38px;
`;
const ActionCenter = styled(TrayButton)`
  width: 80px;
  background: #2b2e37;
`;
const ShowDesktop = styled.button`
  width: 10px;
  height: 80px;
  margin-left: 16px;
  border-left: 1px solid #666;
`;

const tasks = [
  ["Cortana", 0, <circle cx="24" cy="24" r="14" fill="none" stroke="#fff" strokeWidth="3" />],
  ["Task view", 0, <path d="M9 9V13H29V9M9 39V35H29V39M9 18H29V30H9ZM37 9V15M37 25V39M36 18H39V22H36Z" fill="none" stroke="#fff" strokeWidth="2" />],
  ["File Explorer", 1, (
    <>
      <path d="M3 6H19L22 10V14H3Z" fill="#e09a00" />
      <path d="M3 12H20L24 9H44V40H3Z" fill="#ffd35c" />
      <path d="M10 41V27Q10 24 13 24H34Q37 24 37 27V41H31V31H16V41Z" fill="#3a96dd" />
    </>
  )],
  ["Visual Studio Code", 0, (
    <>
      <path d="M36 0V48L47 42V6Z" fill="#2ba4f4" />
      <path d="M0 31 5 37 36 14V0Z" fill="#0a6db5" />
      <path d="M0 18 5 12 36 34V48Z" fill="#0f8cdc" />
    </>
  )],
  ["Chrome", 1, (
    <>
      <circle cx="22" cy="24" r="21" fill="#1da362" />
      <path d="M22 24 4 13A21 21 0 0 1 41 14H22Z" fill="#dd5144" />
      <path d="M22 14H41A21 21 0 0 1 22 45L31 29Z" fill="#ffcd46" />
      <circle cx="22" cy="24" r="10" fill="#fff" /><circle cx="22" cy="24" r="8" fill="#4c8bf5" />
      <circle cx="34" cy="36" r="15" fill="#c9d6e8" /><path d="M21 43Q34 60 47 43L40 41H28Z" fill="#4fd0c0" />
      <path d="M29 25 34 28 37 25 38 32 35 36H31L29 32Z" fill="#6b5540" /><path d="M30 35H38L40 45H29Z" fill="#e0d3bc" />
    </>
  )],
  ["GitHub Desktop", 1, (
    <>
      <circle cx="24" cy="24" r="22" fill="#7a35a0" stroke="#fff" strokeWidth="2" />
      <path d="M12 11 18 14Q24 12 30 14L36 11Q38 17 37 20 40 32 29 34 31 36 31 46H18V41Q12 42 9 35 15 37 18 37 18 35 20 34 9 32 11 20 10 17 12 11Z" fill="#f2f2f2" />
    </>
  )],
  ["Typora", 1, (
    <>
      <path d="M7 1 12 4H37L42 1Q44 6 48 8 44 16 45 24 44 34 48 41 43 43 41 47L36 44H13L8 47Q6 43 1 41 5 34 4 24 5 16 1 8 6 6 7 1Z" fill="#ececec" />
      <path d="M7 6H41V43H7Z" fill="#f6f6f6" />
      <text x="24" y="34" textAnchor="middle" fontFamily='"Liberation Serif", serif' fontSize="28" fill="#333">T</text>
    </>
  )],
  ["Eeschema", 2, (
    <>
      <path d="M3 0H31L47 18V45Q47 48 44 48H3Q0 48 0 45V3Q0 0 3 0Z" fill="#b88c00" />
      <path d="M4 4H28L43 21V43H4Z" fill="#f7f5f3" />
      <path d="M35 0H47V13Z" fill="#c49a00" />
      <path d="M19 5V11M19 21V25H29M17 12H21V20H17ZM30 22H40V27H30ZM6 32H12M12 27V35M12 30 19 25M13 33 19 36V41" fill="none" stroke="#b8470e" strokeWidth="2" />
      <path d="M24 42V32H42M27 36H32M35 36H41M27 41H32M35 41H41" fill="none" stroke="#b8470e" strokeWidth="2" />
    </>
  )],
];

function Taskbar() {
  return (
    <TaskBar>
      <StartButton aria-label="Start">
        <Glyph $size={32} viewBox="0 0 32 32"><path d="M0 5 13 3V15H0ZM15 2 32 0V15H15ZM0 17H13V29L0 27ZM15 17H32V32L15 30Z" fill="#fff" /></Glyph>
      </StartButton>
      <SearchBox>
        <Glyph $size={32} viewBox="0 0 32 32">
          <circle cx="21" cy="11" r="10" fill="none" stroke="#e8e8e8" strokeWidth="2" />
          <path d="M14 18 1 31" stroke="#e8e8e8" strokeWidth="2" />
        </Glyph>
        <SearchInput aria-label="Search" placeholder="在这里输入你要搜索的内容" />
      </SearchBox>
      {tasks.map(([name, state, art]) => (
        <TaskButton key={name} aria-label={name} $open={state > 0} $front={state === 2}>
          <Glyph $size={48} viewBox="0 0 48 48">{art}</Glyph>
        </TaskButton>
      ))}
      <Tray>
        <TrayButton aria-label="Hidden icons">
          <Glyph $size={32} viewBox="0 0 32 32"><path d="M4 22 16 10 28 22" fill="none" stroke="#fff" strokeWidth="2" /></Glyph>
        </TrayButton>
        <TrayButton aria-label="Updates">
          <Glyph $size={32} viewBox="0 0 32 32">
            <path d="M30 16V2L2 6V28L16 30" fill="none" stroke="#fff" strokeWidth="2" />
            <path d="M20 11Q9 10 9 17T16 24M20 11V6M20 11 15 16" fill="none" stroke="#fff" strokeWidth="3" />
            <circle cx="24" cy="25" r="7" fill="#ff9800" />
          </Glyph>
        </TrayButton>
        <TrayButton aria-label="Network">
          <Glyph $size={32} viewBox="0 0 32 32"><path d="M10 6H30V22H6V14M16 22V29M8 30H24M2 5H10V13H2Z" fill="none" stroke="#fff" strokeWidth="2" /></Glyph>
        </TrayButton>
        <TrayButton aria-label="Volume">
          <Glyph $size={32} viewBox="0 0 32 32">
            <path d="M1 11H6L13 4V28L6 21H1ZM17 12Q20 16 17 20" fill="none" stroke="#fff" strokeWidth="2" />
            <path d="M21 8Q27 16 21 24M25 4Q34 16 25 28" fill="none" stroke="#888" strokeWidth="2" />
          </Glyph>
        </TrayButton>
        <TrayButton aria-label="Safely remove hardware">
          <Glyph $size={32} viewBox="0 0 32 32">
            <path d="M12 6H28V21H12M19 21V28M12 29H26" fill="none" stroke="#fff" strokeWidth="2" />
            <path d="M3 10H13V20H3Z" fill="#fff" /><path d="M5 10V3H11V10" fill="none" stroke="#fff" strokeWidth="2" />
          </Glyph>
        </TrayButton>
        <Language>ENG</Language>
        <Clock>16:10<br />2020/10/17</Clock>
        <ActionCenter aria-label="Notifications">
          <Glyph $size={34} viewBox="0 0 34 34"><path d="M1 2H33V26H23L17 32V26H1Z" fill="none" stroke="#fff" strokeWidth="2" /></Glyph>
        </ActionCenter>
        <ShowDesktop aria-label="Show desktop" />
      </Tray>
    </TaskBar>
  );
}

const EdgeStrip = styled.div`
  position: absolute;
  top: 0;
  left: 1679px;
  width: 482px;
  height: 2px;
  border-left: 96px solid #0078d7;
  background: #222;
`;

export default function App() {
  return (
    <Desktop>
      <GlobalStyle />
      <TitleBar $height={46} $inset={3}>
        <Glyph $size={30} viewBox="0 0 44 44">{icons.app}</Glyph>
        <TitleText>{"Eeschema — TB6612.sch [/TB6612-1/] — C:\\Users\\Joey\\Desktop\\PeltierArray\\PeltierArray-V3"}</TitleText>
        <WindowControls maximized />
      </TitleBar>
      <EdgeStrip />
      <MenuBar $height={36} $inset={7}>
        {["File", "Edit", "View", "Place", "Inspect", "Tools", "Preferences", "Help"].map((m) => <button key={m}>{m}</button>)}
      </MenuBar>
      <ToolBar $inset={4}>
        <Tools
          groups={[
            ["save"], ["page"], ["print", "plot"], ["paste"], ["undo", "redo"], ["find", "replace"],
            ["rotate", "zoomIn", "zoomOut", "zoomFit", "zoomArea"], ["hierarchy", "leave"],
            ["opamp", "books", "chip"], ["annotate", "bug", "assign", "net", "table", "bom"], ["pcb", "back"],
          ]}
        />
      </ToolBar>
      <Workspace>
        <Side items={["grid", "inch", "mm", "cursor", "hidden", "ortho"]} on={["inch", "ortho"]} />
        <Editor>
          <EditorView>
            <Schematic />
            <ScrollBar vertical parts={[689, 183, 866]} />
          </EditorView>
          <Corner>
            <CornerScroll><ScrollBar parts={[1249, 941, 1438]} /></CornerScroll>
            <CornerGap />
          </Corner>
        </Editor>
        <Side
          items={[
            "pointer", "highlight", "opamp", "ground", "wire", "bus", "wireEntry", "busEntry", "noConnect", "junction",
            "label", "globalLabel", "hierLabel", "sheet", "importLabel", "sheetPin", "dashed", "text", "camera", "trash",
          ]}
          on={["pointer"]}
        />
      </Workspace>
      <Info
        cols="216px 203px 203px 293px 386px 197px 1fr"
        inset={25}
        items={[
          ["Reference", "TB6612FNG5"], ["Value", "TB6612FNG"], ["Name", "TB6612FNG"], ["Library", "Me-MEGA2560PRO"],
          ["Footprint", "PeltierArray:DIP-16_617_ELL"], ["Description", ""], ["Key words", ""],
        ]}
      />
      <StatusBar $cols="1907px 126px 370px 576px 421px 93px 1fr">
        <StatusCell $plain />
        <StatusCell>Z 9.16</StatusCell>
        <StatusCell $plain>X 4.400  Y 3.250</StatusCell>
        <StatusCell>dx 4.400  dy 3.250  dist 5.470</StatusCell>
        <StatusCell>grid 0.050</StatusCell>
        <StatusCell $plain>Inches</StatusCell>
        <StatusCell />
        <Grip />
      </StatusBar>
      <Taskbar />
      <SymbolDialog />
      <FootprintBrowser />
    </Desktop>
  );
}
